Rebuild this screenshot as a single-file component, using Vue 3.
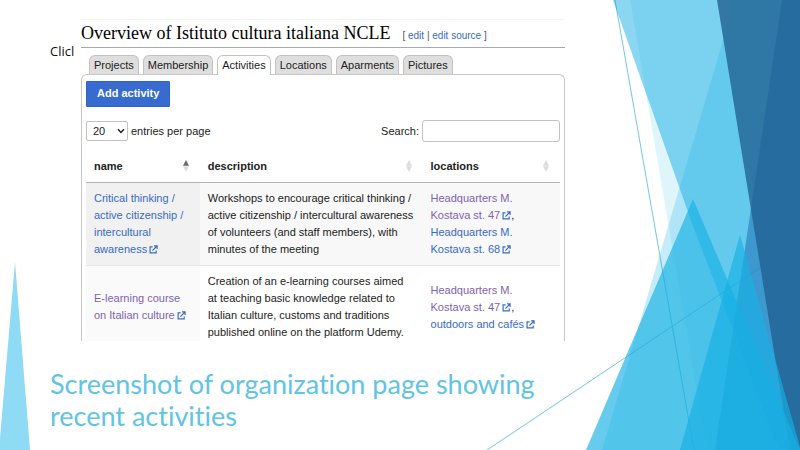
<script setup>
import { ref } from 'vue'

const tabs = ['Projects', 'Membership', 'Activities', 'Locations', 'Aparments', 'Pictures']
const active = ref('Activities')
const pageSize = ref('20')
const query = ref('')

const columns = [
  { key: 'name', sorted: true },
  { key: 'description', sorted: false },
  { key: 'locations', sorted: false },
]

const rows = [
  {
    name: { text: ['Critical thinking /', 'active citizenship /', 'intercultural', 'awareness'], visited: false },
    description: [
      'Workshops to encourage critical thinking /',
      'active citizenship / intercultural awareness',
      'of volunteers (and staff members), with',
      'minutes of the meeting',
    ],
    locations: [
      { text: ['Headquarters M.', 'Kostava st. 47'], visited: true },
      { text: ['Headquarters M.', 'Kostava st. 68'], visited: false },
    ],
  },
  {
    name: { text: ['E-learning course', 'on Italian culture'], visited: true },
    description: [
      'Creation of an e-learning courses aimed',
      'at teaching basic knowledge related to',
      'Italian culture, customs and traditions',
      'published online on the platform Udemy.',
    ],
    locations: [
      { text: ['Headquarters M.', 'Kostava st. 47'], visited: true },
      { text: ['outdoors and cafés'], visited: false },
    ],
  },
]
</script>

<template>
  <main class="slide">
    <svg class="facets" viewBox="0 0 800 450" preserveAspectRatio="none" aria-hidden="true">
      <polygon points="15,262 30,450 -1,450" fill="#8fdaf5" />
      <polygon points="735,0 800,0 800,450 602,450" fill="#5fcbef" fill-opacity=".36" />
      <polygon points="630,0 800,0 800,450 707,450" fill="#5fcbef" fill-opacity=".2" />
      <polygon points="613,0 800,0 800,450 779,450 693,226" fill="#17b0e4" fill-opacity=".5" />
      <g stroke="#17a2cf" stroke-opacity=".6" stroke-width="1">
        <line x1="615" y1="0" x2="694" y2="450" />
        <line x1="487" y1="450" x2="800" y2="241" />
      </g>
      <polygon points="782,0 800,0 800,450 715,450" fill="#2e83c3" fill-opacity=".7" />
      <polygon points="717,0 800,0 800,450 790,450" fill="#226192" fill-opacity=".8" />
      <polygon points="693,199 800,450 586,450" fill="#17b0e4" fill-opacity=".66" />
      <polygon points="740,235 800,447 800,450 680,450" fill="#17b0e4" fill-opacity=".66" />
    </svg>

    <section class="content">
      <p class="placeholder">Clicl</p>

      <article class="page">
        <header class="page-head">
          <h2>Overview of Istituto cultura italiana NCLE</h2>
          <span class="edit">[ <a href="#edit">edit</a> | <a href="#source">edit source</a> ]</span>
        </header>

        <nav class="tabs">
          <button
            v-for="tab in tabs"
            :key="tab"
            type="button"
            :class="['tab', { active: tab === active }]"
            @click="active = tab"
          >{{ tab }}</button>
        </nav>

        <div class="panel">
          <button type="button" class="add">Add activity</button>

          <div class="tools">
            <div class="tool">
              <span class="select-box">
                <select id="page-size" v-model="pageSize">
                  <option>20</option>
                  <option>50</option>
                </select>
                <svg class="chevron" viewBox="0 0 8 6" aria-hidden="true">
                  <path d="M1 1.2 4 4.4 7 1.2" fill="none" stroke="#222" stroke-width="1.5" />
                </svg>
              </span>
              <label for="page-size">entries per page</label>
            </div>
            <div class="tool">
              <label for="search">Search:</label>
              <input id="search" v-model="query" type="text" />
            </div>
          </div>

          <table>
            <thead>
              <tr>
                <th v-for="col in columns" :key="col.key" :class="'col-' + col.key">
                  <button type="button" class="sort">
                    {{ col.key }}
                    <svg viewBox="0 0 6 12" aria-hidden="true">
                      <path d="M3 0 6 5.8H0z" :fill="col.sorted ? '#6b6b6b' : '#dcdcdc'" />
                      <path d="M3 12 6 6.2H0z" fill="#dcdcdc" />
                    </svg>
                  </button>
                </th>
              </tr>
            </thead>
            <tbody>
              <tr v-for="(row, r) in rows" :key="r">
                <td>
                  <a href="#activity" :class="{ visited: row.name.visited }">
                    <template v-for="(line, i) in row.name.text" :key="i"><br v-if="i" />{{ line }}</template>
                  </a><svg class="ext" viewBox="0 0 10 10" aria-hidden="true">
                    <path d="M4 2H1.2v6.8H8V6M3.8 6.2 8.6 1.4M5.6 1H9v3.4" />
                  </svg>
                </td>
                <td>
                  <template v-for="(line, i) in row.description" :key="i"><br v-if="i" />{{ line }}</template>
                </td>
                <td>
                  <template v-for="(place, p) in row.locations" :key="p">
                    <a href="#place" :class="{ visited: place.visited }">
                      <template v-for="(line, i) in place.text" :key="i"><br v-if="i" />{{ line }}</template>
                    </a><svg class="ext" viewBox="0 0 10 10" aria-hidden="true">
                      <path d="M4 2H1.2v6.8H8V6M3.8 6.2 8.6 1.4M5.6 1H9v3.4" />
                    </svg><template v-if="p < row.locations.length - 1">,<br /></template>
                  </template>
                </td>
              </tr>
            </tbody>
          </table>
        </div>
      </article>
    </section>

    <h1>Screenshot of organization page showing<br />recent activities</h1>
  </main>
</template>

<style>
body {
  margin: 0;
  background: #fff;
}
</style>

<style scoped>
.slide {
  position: relative;
  box-sizing: border-box;
  min-height: 100vh;
  padding: 19px 0 0 50px;
  overflow: hidden;
  font-family: "Liberation Sans", Arial, sans-serif;
  font-size: 11px;
  color: #222;
}

.facets {
  position: absolute;
  inset: 0;
  width: 100%;
  height: 100%;
}

.content {
  position: relative;
  display: flex;
  gap: 3px;
  padding-right: 235px;
}

.placeholder {
  flex: none;
  width: 28px;
  margin: 23px 0 0;
  font: 13px/18px "Open Sans", "Noto Sans", sans-serif;
  color: #111;
}

.page {
  flex: 1;
  min-width: 0;
  border-top: 1px solid #f4f4f4;
}

.page-head {
  display: flex;
  align-items: baseline;
  gap: 12px;
  height: 27px;
  border-bottom: 1px solid #a8abae;
}

h2 {
  margin: 0;
  font: 400 18px/26px "Liberation Serif", Georgia, serif;
  color: #000;
  white-space: nowrap;
}

.edit {
  font-size: 10px;
  color: #54595d;
  white-space: nowrap;
}

a {
  color: #376ac9;
  text-decoration: none;
}

a.visited {
  color: #8062b3;
}

button,
select,
input {
  margin: 0;
  font: inherit;
  color: inherit;
}

.tabs {
  display: flex;
  gap: 4px;
  padding: 7px 8px 0;
}

.tab {
  height: 19px;
  padding: 0 4px;
  border: 1px solid #c2c2c2;
  border-bottom: 0;
  border-radius: 6px 6px 0 0;
  background: #dedede;
}

.tab.active {
  position: relative;
  height: 20px;
  margin-bottom: -1px;
  padding-bottom: 1px;
  background: #fff;
}

.panel {
  padding: 6px 4px 0;
  border: 1px solid #c8c8c8;
  border-bottom: 0;
  border-radius: 6px 6px 0 0;
}

.add {
  display: block;
  height: 26px;
  padding: 0 10px 2px;
  border: 1px solid #2f62c4;
  border-radius: 1px;
  background: #376bd0;
  color: #fff;
  font-weight: 700;
}

.tools {
  display: flex;
  justify-content: space-between;
  padding-top: 13px;
}

.tool {
  display: flex;
  align-items: center;
  gap: 3px;
}

.select-box {
  position: relative;
  display: flex;
}

select {
  width: 42px;
  height: 20px;
  padding: 0 6px;
  border: 1px solid #c2c2c2;
  border-radius: 2px;
  background: #fff;
  appearance: none;
}

.chevron {
  position: absolute;
  top: 7px;
  right: 3px;
  width: 8px;
  height: 6px;
  pointer-events: none;
}

input {
  box-sizing: border-box;
  width: 138px;
  height: 22px;
  padding: 0 5px;
  border: 1px solid #c2c2c2;
  border-radius: 3px;
  background: #fff;
}

table {
  width: 100%;
  margin-top: 8px;
  border-collapse: separate;
  border-spacing: 0;
  table-layout: fixed;
}

.col-name {
  width: 24%;
}

.col-description {
  width: 47%;
}

th {
  padding: 0;
  border-bottom: 1px solid #b4b4b4;
}

.sort {
  display: flex;
  align-items: center;
  justify-content: space-between;
  width: 100%;
  height: 32px;
  padding: 0 11px 0 8px;
  border: 0;
  background: none;
  font-weight: 700;
}

.sort svg {
  width: 6px;
  height: 12px;
}

td {
  padding: 7px 0 7px 8px;
  line-height: 17px;
  white-space: nowrap;
}

tbody tr:first-child td {
  background: #f8f8f8;
  border-bottom: 1px solid #e6e6e6;
}

tbody tr:first-child td:first-child {
  background: #f1f1f1;
}

tbody tr:last-child td {
  padding-bottom: 0;
}

tbody tr:last-child td:first-child {
  background: #fafafa;
}

.ext {
  width: 9px;
  height: 9px;
  margin-left: 2px;
  vertical-align: -1px;
}

.ext path {
  fill: none;
  stroke: #376ac9;
  stroke-width: 1.3;
}

h1 {
  position: relative;
  margin: 27px 0 0;
  font: 400 27px/32px Lato, "Open Sans", sans-serif;
  font-variant-ligatures: none;
  color: #62c3e3;
}
</style>
